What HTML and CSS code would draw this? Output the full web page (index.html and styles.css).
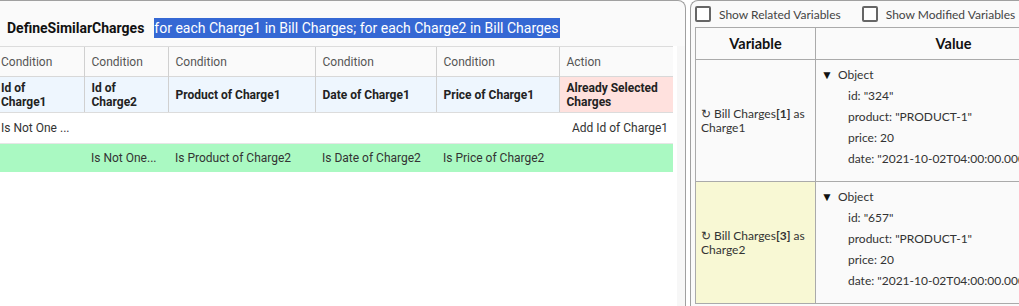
FILE: index.html
```html
<!DOCTYPE html>
<html lang="en">
<head>
    <meta charset="UTF-8">
    <title>DefineSimilarCharges</title>
    <link rel="stylesheet" href="styles.css">
</head>
<body>

<div class="layout">
    <!-- Tabla de decision -->
    <div class="rule-panel">
        <div class="rule-title">
            <span class="rule-name">DefineSimilarCharges</span>
            <span class="rule-loop">for each Charge1 in Bill Charges; for each Charge2 in Bill Charges</span>
        </div>
        <div class="rule-body">
            <div class="rule-scroll">
                <table class="rule-table">
                    <colgroup>
                        <col style="width:90px">
                        <col style="width:84px">
                        <col style="width:147px">
                        <col style="width:121px">
                        <col style="width:123px">
                        <col style="width:114px">
                    </colgroup>
                    <tr class="kind-row">
                        <td>Condition</td>
                        <td>Condition</td>
                        <td>Condition</td>
                        <td>Condition</td>
                        <td>Condition</td>
                        <td>Action</td>
                    </tr>
                    <tr class="name-row">
                        <td>Id of<br>Charge1</td>
                        <td>Id of<br>Charge2</td>
                        <td>Product of Charge1</td>
                        <td>Date of Charge1</td>
                        <td>Price of Charge1</td>
                        <td class="action">Already Selected Charges</td>
                    </tr>
                    <tr class="data-row">
                        <td>Is Not One ...</td>
                        <td></td>
                        <td></td>
                        <td></td>
                        <td></td>
                        <td class="right">Add Id of Charge1</td>
                    </tr>
                    <tr class="data-row hit">
                        <td></td>
                        <td>Is Not One...</td>
                        <td>Is Product of Charge2</td>
                        <td>Is Date of Charge2</td>
                        <td>Is Price of Charge2</td>
                        <td></td>
                    </tr>
                </table>
            </div>
            <div class="rule-gutter"></div>
        </div>
    </div>

    <!-- Variables -->
    <div class="vars-panel">
        <div class="vars-options">
            <label class="check"><span class="box"></span>Show Related Variables</label>
            <label class="check"><span class="box"></span>Show Modified Variables</label>
        </div>
        <table class="vars-table">
            <colgroup>
                <col style="width:120px">
                <col style="width:276px">
            </colgroup>
            <tr>
                <th>Variable</th>
                <th>Value</th>
            </tr>
            <tr>
                <td class="var-name">↻ Bill Charges<b>[1]</b> as Charge1</td>
                <td class="var-value">
                    <div class="obj"><span class="tri">▼</span>Object</div>
                    <div class="prop">id: "324"</div>
                    <div class="prop">product: "PRODUCT-1"</div>
                    <div class="prop">price: 20</div>
                    <div class="prop">date: "2021-10-02T04:00:00.000Z"</div>
                </td>
            </tr>
            <tr>
                <td class="var-name current">↻ Bill Charges<b>[3]</b> as Charge2</td>
                <td class="var-value">
                    <div class="obj"><span class="tri">▼</span>Object</div>
                    <div class="prop">id: "657"</div>
                    <div class="prop">product: "PRODUCT-1"</div>
                    <div class="prop">price: 20</div>
                    <div class="prop">date: "2021-10-02T04:00:00.000Z"</div>
                </td>
            </tr>
        </table>
    </div>
</div>

</body>
</html>
```

FILE: styles.css
```css
body {
    margin: 0;
    background-color: #fff;
    overflow: hidden;
}
.layout {
    display: flex;
    gap: 4px;
    height: 306px;
}

/* Panel izquierdo */
.rule-panel {
    width: 685px;
    flex-shrink: 0;
    display: flex;
    flex-direction: column;
    border-top: 1px solid #a0a0a0;
    border-right: 1px solid #a0a0a0;
    border-top-right-radius: 8px;
    background-color: #fafafa;
    font-family: Roboto, sans-serif;
}
.rule-title {
    display: flex;
    align-items: center;
    box-sizing: border-box;
    height: 45px;
    padding: 9px 0 0 7px;
    white-space: nowrap;
}
.rule-name {
    font-weight: bold;
    font-size: 14px;
    color: #111;
    margin-right: 10px;
}
.rule-loop {
    background-color: #3568d4;
    color: #fff;
    font-size: 14px;
    line-height: 20px;
    padding-right: 1px;
}
.rule-body {
    flex: 1;
    display: flex;
}
.rule-scroll {
    width: 677px;
    background-color: #fff;
    overflow: hidden;
}
.rule-gutter {
    flex: 1;
    background-color: #f7f7f7;
}
.rule-table {
    margin-left: -6px;
    border-collapse: collapse;
    table-layout: fixed;
    width: 679px;
    font-size: 12px;
}
.rule-table td {
    padding: 0 6px 0 7px;
    vertical-align: middle;
}
.kind-row td {
    height: 29px;
    color: #555;
    border-top: 1px solid #dcdcdc;
    border-left: 1px solid #d0d0d0;
    background-color: #fafafa;
}
.name-row td {
    height: 35px;
    font-weight: bold;
    color: #222;
    line-height: 14px;
    background-color: #eef6fe;
    border-top: 1px solid #d8d8d8;
    border-left: 1px solid #d0d0d0;
    border-bottom: 1px solid #dcdcdc;
}
.kind-row td:first-child, .name-row td:first-child {
    border-left: none;
}
.name-row .action {
    background-color: #ffe1de;
}
.data-row td {
    height: 30px;
    color: #333;
    white-space: nowrap;
}
.data-row .right {
    text-align: right;
    padding-right: 5px;
}
.data-row.hit td {
    height: 28px;
    background-color: #aaf9c2;
    border-top: 1px solid #e6e6e6;
}

/* Panel derecho */
.vars-panel {
    flex: 1;
    overflow: hidden;
    border-top: 1px solid #a0a0a0;
    border-left: 1px solid #a0a0a0;
    border-top-left-radius: 8px;
    background-color: #fafafa;
    padding-left: 4px;
    font-family: Lato, sans-serif;
    font-size: 12px;
    color: #333;
}
.vars-options {
    display: flex;
    gap: 21px;
    height: 26px;
    align-items: center;
    white-space: nowrap;
}
.check {
    display: flex;
    align-items: center;
    gap: 8px;
    color: #444;
}
.check .box {
    width: 12px;
    height: 12px;
    border: 2px solid #666;
    border-radius: 2px;
    background-color: #fff;
}
.vars-table {
    border-collapse: collapse;
    table-layout: fixed;
    width: 396px;
}
.vars-table th, .vars-table td {
    border: 1px solid #aaa;
}
.vars-table th {
    height: 29px;
    font-size: 14.5px;
    font-weight: bold;
    color: #111;
}
.var-name {
    height: 121px;
    padding: 0 5px;
    vertical-align: middle;
    line-height: 14px;
}
.var-name.current {
    background-color: #f8f8d4;
}
.var-value {
    vertical-align: top;
    padding: 7px 0 0 5px;
    white-space: nowrap;
}
.obj {
    line-height: 16px;
}
.tri {
    display: inline-block;
    width: 17px;
    font-size: 12px;
    color: #111;
}
.prop {
    padding-left: 27px;
    margin-top: 5px;
    line-height: 16px;
}
```
